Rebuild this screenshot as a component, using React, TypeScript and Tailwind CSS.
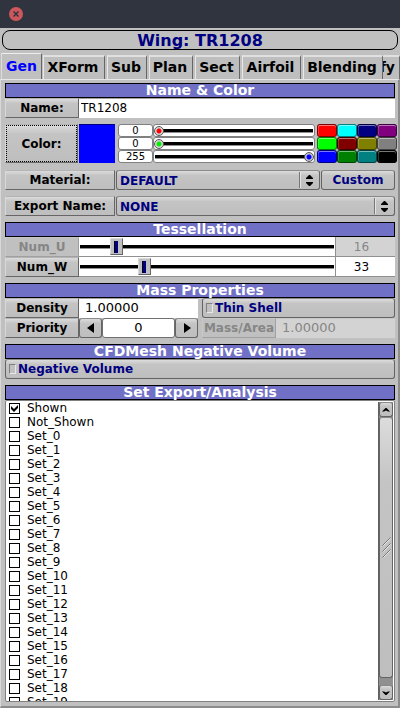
import React, { useState } from "react";

const raised =
  "border border-t-[#b4b4b4] border-l-[#d8d8d8] border-r-[#666] border-b-[#666] bg-linear-to-b from-[#dcdcdc] from-0% via-[#c4c4c4] via-25% to-[#bebebe]";

const roundRaised =
  "rounded-[3px] border border-[#646464] border-t-[#8a8a8a] bg-linear-to-b from-[#dcdcdc] from-0% via-[#c4c4c4] via-25% to-[#bebebe]";

function Heading({ children }: { children: React.ReactNode }) {
  return (
    <h2 className="h-[15px] border border-black bg-[#7070c6] text-center text-sm leading-[13px] font-bold text-white">
      {children}
    </h2>
  );
}

function LabelButton({ children, className, disabled }: { children: React.ReactNode; className: string; disabled?: boolean }) {
  return (
    <button
      disabled={disabled}
      className={`shrink-0 text-center text-xs leading-[18px] font-bold whitespace-nowrap ${
        disabled ? "border border-[#c8c8c8] border-r-[#a0a0a0] border-b-[#a0a0a0] bg-[#c0c0c0] text-[#868686]" : raised
      } ${className}`}
    >
      {children}
    </button>
  );
}

function Choice({ label, value, className }: { label: string; value: string; className?: string }) {
  return (
    <div className={`flex h-5 min-w-0 flex-1 ${roundRaised} ${className ?? ""}`}>
      <select
        aria-label={label}
        className="min-w-0 flex-1 appearance-none bg-transparent pt-px pl-[3px] text-xs leading-[18px] font-bold text-[#000080] outline-none"
      >
        <option>{value}</option>
      </select>
      <span className="my-px flex w-5 items-center justify-center border-l border-[#777] shadow-[inset_1px_0_#e4e4e4]">
        <svg width="7" height="11" viewBox="0 0 7 11" aria-hidden="true">
          <path d="M3 0h1l3 3v1H0V3zM0 7h7v1l-3 3H3L0 8z" fill="#000" />
        </svg>
      </span>
    </div>
  );
}

const knobs = {
  red: "[&::-webkit-slider-thumb]:bg-[radial-gradient(circle,#f00_0_2px,#d8d8d8_3px)]",
  green: "[&::-webkit-slider-thumb]:bg-[radial-gradient(circle,#0e0_0_2px,#d8d8d8_3px)]",
  blue: "[&::-webkit-slider-thumb]:bg-[radial-gradient(circle,#00f_0_2px,#c0c0d8_3px)]",
};

function Channel({ name, value, knob }: { name: string; value: number; knob: string }) {
  const [v, setV] = useState(value);
  return (
    <div className="flex h-[13px]">
      <input
        aria-label={`${name} value`}
        value={v}
        onChange={(e) => setV(Number(e.target.value) || 0)}
        className="w-[35px] rounded-[3px] border border-[#808080] bg-white text-center text-[10px] leading-[11px] outline-none"
      />
      <div className="flex min-w-0 flex-1 items-center rounded-[3px] border border-[#808080] bg-white">
        <input
          type="range"
          aria-label={name}
          min={0}
          max={255}
          value={v}
          onChange={(e) => setV(Number(e.target.value))}
          className={`h-[10px] w-full appearance-none bg-linear-to-b from-black from-75% to-[#909090] to-75% bg-[length:calc(100%_-_2px)_4px] bg-center bg-no-repeat outline-none [&::-webkit-slider-thumb]:size-[10px] [&::-webkit-slider-thumb]:appearance-none [&::-webkit-slider-thumb]:rounded-full [&::-webkit-slider-thumb]:border [&::-webkit-slider-thumb]:border-[#555] ${knob}`}
        />
      </div>
    </div>
  );
}

function Tess({ name, value, max, disabled }: { name: string; value: number; max: number; disabled?: boolean }) {
  const [v, setV] = useState(value);
  return (
    <div className="flex h-5">
      <LabelButton className="w-[74px]" disabled={disabled}>
        {name}
      </LabelButton>
      <div className="flex min-w-0 flex-1 items-center border-r border-b border-[#909090] bg-white">
        <input
          type="range"
          aria-label={name}
          min={0}
          max={max}
          value={v}
          onChange={(e) => setV(Number(e.target.value))}
          className="h-[17px] w-full appearance-none bg-linear-to-b from-black from-75% to-[#909090] to-75% bg-[length:calc(100%_-_2px)_4px] bg-center bg-no-repeat outline-none [&::-webkit-slider-thumb]:h-[17px] [&::-webkit-slider-thumb]:w-[13px] [&::-webkit-slider-thumb]:appearance-none [&::-webkit-slider-thumb]:border [&::-webkit-slider-thumb]:border-[#d8d8d8] [&::-webkit-slider-thumb]:border-r-[#666] [&::-webkit-slider-thumb]:border-b-[#666] [&::-webkit-slider-thumb]:bg-[#c0c0c0] [&::-webkit-slider-thumb]:bg-linear-to-r [&::-webkit-slider-thumb]:from-black [&::-webkit-slider-thumb]:from-25% [&::-webkit-slider-thumb]:to-[#000080] [&::-webkit-slider-thumb]:to-25% [&::-webkit-slider-thumb]:bg-[length:4px_12px] [&::-webkit-slider-thumb]:bg-center [&::-webkit-slider-thumb]:bg-no-repeat"
        />
      </div>
      <input
        aria-label={`${name} value`}
        value={v}
        disabled={disabled}
        onChange={(e) => setV(Number(e.target.value) || 0)}
        className="w-[59px] border-b border-[#909090] bg-white pr-[8px] text-center text-xs outline-none disabled:bg-[#d3d3d3] disabled:text-[#868686]"
      />
    </div>
  );
}

function Flag({ label, className }: { label: string; className?: string }) {
  return (
    <label className={`flex h-5 items-center gap-[2px] pl-[3px] text-xs leading-[18px] font-bold text-[#000080] ${roundRaised} ${className ?? ""}`}>
      <input
        type="checkbox"
        className="h-[10px] w-[7px] appearance-none border border-[#808080] border-r-[#e8e8e8] border-b-[#e8e8e8] bg-[#c0c0c0] checked:bg-[#000080]"
      />
      {label}
    </label>
  );
}

const tabs = [
  { name: "XForm", width: "w-[62px]" },
  { name: "Sub", width: "w-[40px]" },
  { name: "Plan", width: "w-[44px]" },
  { name: "Sect", width: "w-[45px]" },
  { name: "Airfoil", width: "w-[59px]" },
  { name: "Blending", width: "w-[80px]" },
];

const swatches = [
  ["red", "bg-[#ff0000]"],
  ["cyan", "bg-[#00ffff]"],
  ["navy", "bg-[#000080]"],
  ["purple", "bg-[#800080]"],
  ["lime", "bg-[#00ff00]"],
  ["maroon", "bg-[#800000]"],
  ["olive", "bg-[#808000]"],
  ["gray", "bg-[#808080]"],
  ["blue", "bg-[#0000ff]"],
  ["green", "bg-[#008000]"],
  ["teal", "bg-[#008080]"],
  ["black", "bg-[#000000]"],
];

const sets = ["Shown", "Not_Shown", ...Array.from({ length: 20 }, (_, i) => `Set_${i}`)];

function SetRow({ name }: { name: string }) {
  return (
    <label className="flex h-[14px] items-center text-xs leading-[14px]">
      <span className="mr-[7px] grid size-[11px] place-items-center">
        <input
          type="checkbox"
          defaultChecked={name === "Shown"}
          className="peer col-start-1 row-start-1 size-[11px] appearance-none border border-black bg-white"
        />
        <svg
          width="7"
          height="7"
          viewBox="0 0 7 7"
          aria-hidden="true"
          className="pointer-events-none invisible col-start-1 row-start-1 peer-checked:visible"
        >
          <path d="M0 1L3 4L7 0V3L3 7L0 4z" fill="#000" />
        </svg>
      </span>
      {name}
    </label>
  );
}

function Arrow({ d, label, className }: { d: string; label: string; className: string }) {
  return (
    <button aria-label={label} className={`flex shrink-0 items-center justify-center ${roundRaised} ${className}`}>
      <svg width="8" height="10" viewBox="0 0 8 10" aria-hidden="true">
        <path d={d} fill="#000" />
      </svg>
    </button>
  );
}

export default function App() {
  const [priority, setPriority] = useState(0);
  return (
    <div className="bg-[#c0c0c0] font-['DejaVu_Sans',sans-serif] text-black">
      <header className="flex h-7 items-center bg-[#30343f] pl-[9px]">
        <button aria-label="Close" className="flex size-[14px] items-center justify-center rounded-full bg-[#cc575d]">
          <svg width="6" height="6" viewBox="0 0 6 6" aria-hidden="true">
            <path d="M.5.5l5 5M5.500.5l-5 5" stroke="#30343f" strokeWidth="1.500" />
          </svg>
        </button>
      </header>

      <div className="px-[2px] pt-[2px]">
        <h1 className="h-5 rounded-[8px] border border-black text-center text-base leading-[19px] font-bold text-[#000080]">
          Wing: TR1208
        </h1>
      </div>

      <nav className="mt-[3px] flex h-[26px] items-end gap-[2px] overflow-hidden pl-px text-sm font-bold">
        <button className="-mr-px h-[26px] w-[41px] shrink-0 border-t border-r border-l border-t-[#eee] border-r-[#666] border-l-[#ddd] pb-[2px] text-[#0000ff]">
          Gen
        </button>
        {tabs.map((tab) => (
          <button
            key={tab.name}
            className={`h-6 shrink-0 border-t-2 border-r border-l border-t-[#e0e0e0] border-r-[#666] border-l-[#e8e8e8] bg-[#bebebe] pr-[2px] pb-[2px] ${tab.width}`}
          >
            {tab.name}
          </button>
        ))}
        <button className="-ml-[2px] flex h-6 min-w-0 flex-1 items-center justify-end overflow-hidden border-t-2 border-r border-t-[#e0e0e0] border-r-[#666] bg-[#bebebe] pr-1 pb-[2px]">
          fy
        </button>
      </nav>

      <main className="border-t border-r-2 border-b-2 border-l border-t-[#e8e8e8] border-r-[#8c8c8c] border-b-[#8c8c8c] border-l-[#d8d8d8] pt-[3px] pr-[3px] pb-[4px] pl-1">
        <section>
          <Heading>Name &amp; Color</Heading>
          <div className="flex h-5">
            <LabelButton className="w-[74px]">Name:</LabelButton>
            <input
              aria-label="Name"
              defaultValue="TR1208"
              className="min-w-0 flex-1 border-t border-[#a0a0a0] bg-white pb-px pl-[2px] text-xs outline-none"
            />
          </div>
          <div className="mt-[6px] -mr-[2px] flex h-[39px]">
            <button className={`w-[73px] ${raised}`}>
              <span className="flex size-full items-center justify-center border border-dotted border-black text-xs font-bold">
                Color:
              </span>
            </button>
            <div className="ml-px w-9 border-t border-[#000080] bg-[#0000ff]" />
            <div className="ml-[3px] flex min-w-0 flex-1 flex-col">
              <Channel name="Red" value={0} knob={knobs.red} />
              <Channel name="Green" value={0} knob={knobs.green} />
              <Channel name="Blue" value={255} knob={knobs.blue} />
            </div>
            <div className="ml-[2px] grid grid-cols-4">
              {swatches.map(([name, color]) => (
                <button
                  key={name}
                  aria-label={name}
                  className={`h-[13px] w-5 rounded-[3px] border border-black/50 shadow-[inset_0_1px_#ffffff77,inset_1px_0_#ffffff33] ${color}`}
                />
              ))}
            </div>
          </div>
          <div className="mt-[7px] flex h-5 gap-px">
            <LabelButton className="w-[110px]">Material:</LabelButton>
            <Choice label="Material" value="DEFAULT" />
            <button className={`w-[74px] text-xs leading-[18px] font-bold text-[#000080] ${roundRaised}`}>Custom</button>
          </div>
          <div className="mt-[6px] flex h-5 gap-px">
            <LabelButton className="w-[110px]">Export Name:</LabelButton>
            <Choice label="Export Name" value="NONE" />
          </div>
        </section>

        <section className="mt-[6px]">
          <Heading>Tessellation</Heading>
          <Tess name="Num_U" value={16} max={127} disabled />
          <Tess name="Num_W" value={33} max={136} />
        </section>

        <section className="mt-[6px]">
          <Heading>Mass Properties</Heading>
          <div className="flex gap-[4px]">
            <div className="min-w-0 flex-1">
              <div className="flex h-5">
                <LabelButton className="w-[74px]">Density</LabelButton>
                <input
                  aria-label="Density"
                  defaultValue="1.00000"
                  className="min-w-0 flex-1 border-t border-[#a0a0a0] bg-white pb-px pl-[6px] text-[13px] outline-none"
                />
              </div>
              <div className="flex h-5">
                <LabelButton className="w-[74px]">Priority</LabelButton>
                <Arrow d="M7 0v10L0 5z" label="Decrease" className="w-[23px]" />
                <input
                  aria-label="Priority"
                  value={priority}
                  onChange={(e) => setPriority(Number(e.target.value) || 0)}
                  className="min-w-0 flex-1 rounded-[3px] border border-[#707070] bg-white text-center text-[13px] outline-none"
                />
                <Arrow d="M1 0v10l7-5z" label="Increase" className="w-[23px]" />
              </div>
            </div>
            <div className="min-w-0 flex-1">
              <Flag label="Thin Shell" />
              <div className="flex h-5">
                <LabelButton className="w-[74px]" disabled>
                  Mass/Area
                </LabelButton>
                <input
                  aria-label="Mass/Area"
                  defaultValue="1.00000"
                  disabled
                  className="min-w-0 flex-1 border-t border-[#c8c8c8] bg-[#d3d3d3] pb-px pl-[6px] text-[13px] text-[#868686]"
                />
              </div>
            </div>
          </div>
        </section>

        <section className="mt-[6px]">
          <Heading>CFDMesh Negative Volume</Heading>
          <Flag label="Negative Volume" />
        </section>

        <section className="mt-[6px]">
          <Heading>Set Export/Analysis</Heading>
          <div className="flex h-[302px] rounded-[2px] border border-[#808080] bg-white">
            <div className="min-w-0 flex-1 overflow-hidden pl-[3px]">
              {sets.map((name) => (
                <SetRow key={name} name={name} />
              ))}
            </div>
            <div className="my-px mr-px flex w-[15px] flex-col border-l border-[#606060] bg-[#909090]">
              <Arrow d="M0 6.500L3.500 3h1L8 6.500H6L4 5.500l-2 1z" label="Scroll up" className="h-[15px]" />
              <div className={`flex h-[261px] items-center justify-center ${roundRaised}`}>
                <svg width="9" height="21" viewBox="0 0 9 21" fill="none" aria-hidden="true">
                  <path d="M.5 8.500l8-8m-8 14l8-8m-8 14l8-8" stroke="#777" />
                  <path d="M1.500 8.500l7-7m-7 13l7-7m-7 13l7-7" stroke="#e8e8e8" />
                </svg>
              </div>
              <div className="flex-1" />
              <Arrow d="M0 3.500L3.500 7h1L8 3.500H6L4 4.500l-2-1z" label="Scroll down" className="h-[15px]" />
            </div>
          </div>
        </section>
      </main>
    </div>
  );
}
